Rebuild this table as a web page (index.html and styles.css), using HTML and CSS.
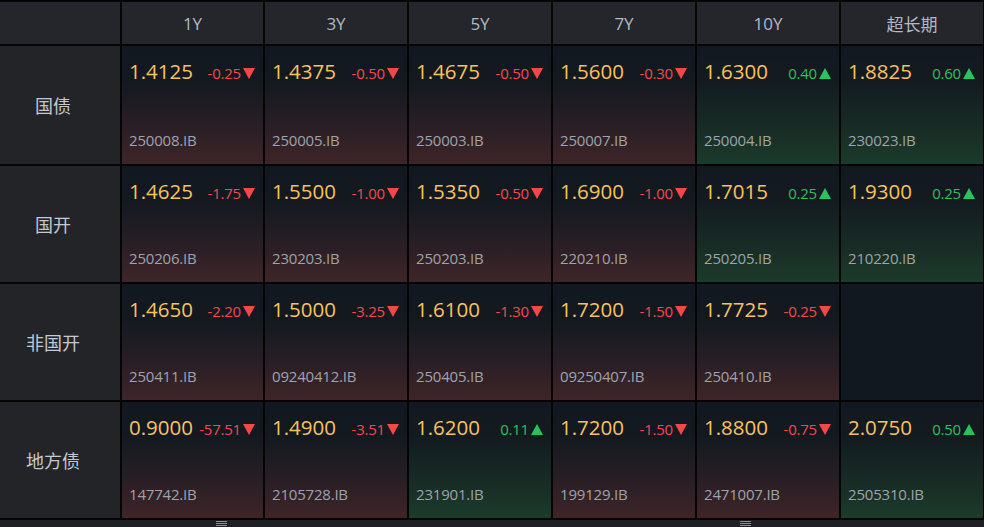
FILE: index.html
```html
<!DOCTYPE html>
<html lang="zh-CN">
<head>
<meta charset="utf-8">
<title>债券收益率</title>
<link rel="stylesheet" href="styles.css">
</head>
<body>
<div class="board">
  <div class="grid">
    <div class="head corner"></div>
    <div class="head">1Y</div>
    <div class="head">3Y</div>
    <div class="head">5Y</div>
    <div class="head">7Y</div>
    <div class="head">10Y</div>
    <div class="head">超长期</div>

    <div class="label">国债</div>
    <div class="cell down"><div class="top"><span class="price">1.4125</span><span class="chg">-0.25<i class="tri"></i></span></div><div class="code">250008.IB</div></div>
    <div class="cell down"><div class="top"><span class="price">1.4375</span><span class="chg">-0.50<i class="tri"></i></span></div><div class="code">250005.IB</div></div>
    <div class="cell down"><div class="top"><span class="price">1.4675</span><span class="chg">-0.50<i class="tri"></i></span></div><div class="code">250003.IB</div></div>
    <div class="cell down"><div class="top"><span class="price">1.5600</span><span class="chg">-0.30<i class="tri"></i></span></div><div class="code">250007.IB</div></div>
    <div class="cell up"><div class="top"><span class="price">1.6300</span><span class="chg">0.40<i class="tri"></i></span></div><div class="code">250004.IB</div></div>
    <div class="cell up"><div class="top"><span class="price">1.8825</span><span class="chg">0.60<i class="tri"></i></span></div><div class="code">230023.IB</div></div>

    <div class="label">国开</div>
    <div class="cell down"><div class="top"><span class="price">1.4625</span><span class="chg">-1.75<i class="tri"></i></span></div><div class="code">250206.IB</div></div>
    <div class="cell down"><div class="top"><span class="price">1.5500</span><span class="chg">-1.00<i class="tri"></i></span></div><div class="code">230203.IB</div></div>
    <div class="cell down"><div class="top"><span class="price">1.5350</span><span class="chg">-0.50<i class="tri"></i></span></div><div class="code">250203.IB</div></div>
    <div class="cell down"><div class="top"><span class="price">1.6900</span><span class="chg">-1.00<i class="tri"></i></span></div><div class="code">220210.IB</div></div>
    <div class="cell up"><div class="top"><span class="price">1.7015</span><span class="chg">0.25<i class="tri"></i></span></div><div class="code">250205.IB</div></div>
    <div class="cell up"><div class="top"><span class="price">1.9300</span><span class="chg">0.25<i class="tri"></i></span></div><div class="code">210220.IB</div></div>

    <div class="label">非国开</div>
    <div class="cell down"><div class="top"><span class="price">1.4650</span><span class="chg">-2.20<i class="tri"></i></span></div><div class="code">250411.IB</div></div>
    <div class="cell down"><div class="top"><span class="price">1.5000</span><span class="chg">-3.25<i class="tri"></i></span></div><div class="code">09240412.IB</div></div>
    <div class="cell down"><div class="top"><span class="price">1.6100</span><span class="chg">-1.30<i class="tri"></i></span></div><div class="code">250405.IB</div></div>
    <div class="cell down"><div class="top"><span class="price">1.7200</span><span class="chg">-1.50<i class="tri"></i></span></div><div class="code">09250407.IB</div></div>
    <div class="cell down"><div class="top"><span class="price">1.7725</span><span class="chg">-0.25<i class="tri"></i></span></div><div class="code">250410.IB</div></div>
    <div class="cell empty"></div>

    <div class="label">地方债</div>
    <div class="cell down"><div class="top"><span class="price">0.9000</span><span class="chg">-57.51<i class="tri"></i></span></div><div class="code">147742.IB</div></div>
    <div class="cell down"><div class="top"><span class="price">1.4900</span><span class="chg">-3.51<i class="tri"></i></span></div><div class="code">2105728.IB</div></div>
    <div class="cell up"><div class="top"><span class="price">1.6200</span><span class="chg">0.11<i class="tri"></i></span></div><div class="code">231901.IB</div></div>
    <div class="cell down"><div class="top"><span class="price">1.7200</span><span class="chg">-1.50<i class="tri"></i></span></div><div class="code">199129.IB</div></div>
    <div class="cell down"><div class="top"><span class="price">1.8800</span><span class="chg">-0.75<i class="tri"></i></span></div><div class="code">2471007.IB</div></div>
    <div class="cell up"><div class="top"><span class="price">2.0750</span><span class="chg">0.50<i class="tri"></i></span></div><div class="code">2505310.IB</div></div>
  </div>
  <div class="footer">
    <span class="grip grip-left"></span>
    <span class="grip grip-right"></span>
  </div>
</div>
</body>
</html>
```
FILE: styles.css
```css
html, body {
  margin: 0;
  padding: 0;
  background: #0a0a0b;
}
body {
  width: 984px;
  height: 527px;
  overflow: hidden;
  font-family: "Open Sans", "Noto Sans CJK SC", sans-serif;
}
.board {
  display: flex;
  flex-direction: column;
  width: 984px;
}
.grid {
  display: grid;
  grid-template-columns: 120px 141px repeat(5, 142px);
  grid-template-rows: 42px 118px 116px 116px 116px;
  gap: 2px;
  padding: 2px 1px 2px 0;
  background: #050506;
}
.head {
  background: #25262b;
  color: #b4b8c0;
  font-size: 17px;
  display: flex;
  align-items: center;
  justify-content: center;
  font-family: "Open Sans", "Noto Sans CJK SC", sans-serif;
}
.label {
  background: #232428;
  color: #c4c8d0;
  font-size: 18px;
  display: flex;
  align-items: center;
  justify-content: center;
  padding-right: 14px;
  font-family: "Noto Sans CJK SC", sans-serif;
}
.cell {
  display: flex;
  flex-direction: column;
  justify-content: space-between;
  padding: 11px 8px 14px 7px;
  background: #121820;
}
.cell.down {
  background: linear-gradient(to bottom, #121820 0%, #141920 30%, #2a1f25 70%, #3f2529 100%);
}
.cell.up {
  background: linear-gradient(to bottom, #121820 0%, #131b20 30%, #182c25 70%, #1b3b2b 100%);
}
.cell.empty {
  background: #121820;
}
.top {
  display: flex;
  justify-content: space-between;
  align-items: baseline;
}
.price {
  color: #f8c261;
  font-size: 20.5px;
}
.chg {
  font-size: 15px;
  display: flex;
  align-items: baseline;
  letter-spacing: -0.2px;
}
.down .chg { color: #f24a4a; }
.up .chg { color: #27c35c; }
.tri {
  display: inline-block;
  width: 0;
  height: 0;
  margin-left: 2px;
  border-left: 6px solid transparent;
  border-right: 6px solid transparent;
}
.down .tri {
  border-top: 11px solid #f24848;
}
.up .tri {
  border-bottom: 11px solid #27c35c;
}
.code {
  color: #9ea3ac;
  font-size: 15px;
  letter-spacing: -0.2px;
}
.footer {
  height: 7px;
  background: #1f2023;
  position: relative;
  display: flex;
}
.grip {
  position: absolute;
  top: 1px;
  width: 11px;
  height: 5px;
  background: repeating-linear-gradient(to bottom, #8a8d93 0 1px, transparent 1px 2px);
}
.grip-left { left: 216px; }
.grip-right { left: 740px; }
```
